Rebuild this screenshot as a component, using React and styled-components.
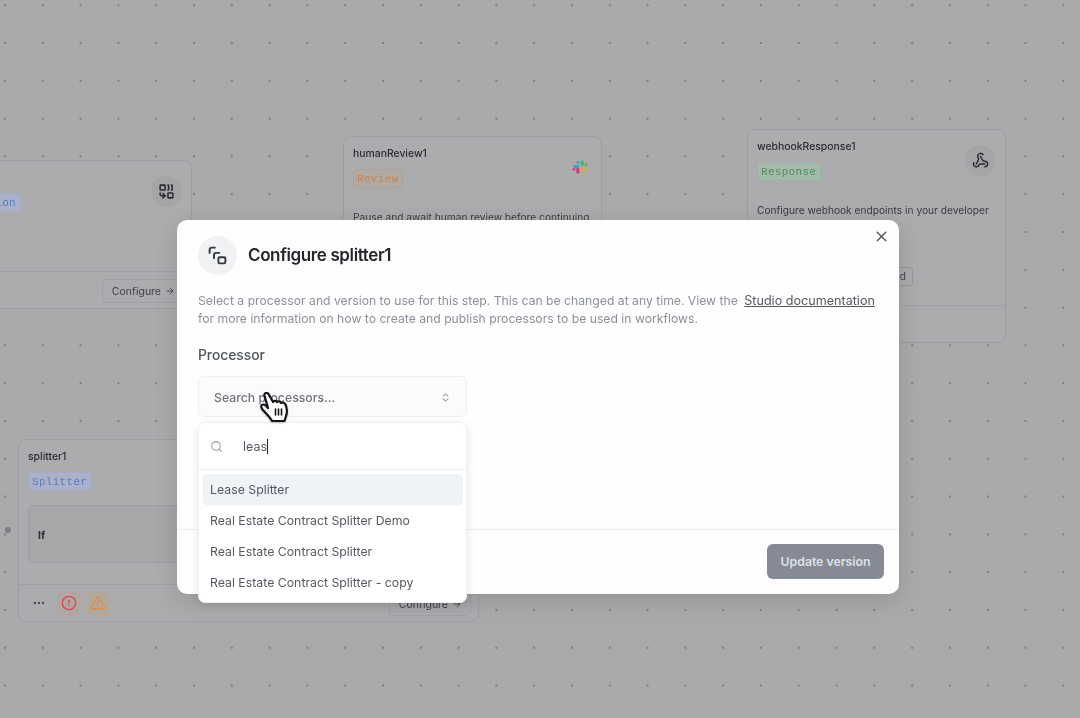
import React from "react";
import styled, { createGlobalStyle } from "styled-components";
import {
  ArrowRight,
  ChevronsUpDown,
  CircleAlert,
  Combine,
  Ellipsis,
  Search,
  TriangleAlert,
  Webhook,
  X,
} from "lucide-react";

const GlobalStyle = createGlobalStyle`
  html, body {
    margin: 0;
    padding: 0;
    width: 1080px;
    height: 718px;
    overflow: hidden;
    font-family: Inter, "Liberation Sans", sans-serif;
  }
`;

const processors = [
  "Lease Splitter",
  "Real Estate Contract Splitter Demo",
  "Real Estate Contract Splitter",
  "Real Estate Contract Splitter - copy",
];

const tones = {
  blue: { bg: "#a9b2c8", border: "#a3adc5", color: "#5a78c4" },
  orange: { bg: "#b1aaa2", border: "#a9a39d", color: "#c98350" },
  green: { bg: "#a5baab", border: "#9eb2a4", color: "#4f8f63" },
};

export default function App() {
  return (
    <>
      <GlobalStyle />
      <Page>
        <Canvas>
          <Node style={{ left: -67, top: 160, width: 259, height: 149 }}>
            <NodeBody>
              <NodeName>extraction1</NodeName>
              <Badge $tone="blue">Extraction</Badge>
            </NodeBody>
            <IconCircle>
              <Combine size={17} strokeWidth={2.2} />
            </IconCircle>
            <NodeFooter $end>
              <ConfigureButton>
                Configure <ArrowRight size={10} />
              </ConfigureButton>
            </NodeFooter>
          </Node>

          <Node style={{ left: 343, top: 136, width: 259, height: 200 }}>
            <NodeBody>
              <NodeName>humanReview1</NodeName>
              <Badge $tone="orange">Review</Badge>
              <NodeText>Pause and await human review before continuing.</NodeText>
            </NodeBody>
            <SlackSpot>
              <SlackLogo />
            </SlackSpot>
          </Node>

          <Node style={{ left: 747, top: 129, width: 259, height: 214 }}>
            <NodeBody>
              <NodeName>webhookResponse1</NodeName>
              <Badge $tone="green">Response</Badge>
              <NodeText>Configure webhook endpoints in your developer</NodeText>
            </NodeBody>
            <IconCircle>
              <Webhook size={17} strokeWidth={2} />
            </IconCircle>
            <StatusPill>Enabled</StatusPill>
            <NodeFooter />
          </Node>

          <Node style={{ left: 18, top: 439, width: 461, height: 183 }}>
            <NodeBody>
              <NodeName>splitter1</NodeName>
              <Badge $tone="blue">Splitter</Badge>
              <ConditionBox>If</ConditionBox>
            </NodeBody>
            <NodeFooter>
              <FooterIcons>
                <MoreIcon>
                  <Ellipsis size={14} strokeWidth={2} />
                </MoreIcon>
                <AlertSpot $bg="#b3a5a3">
                  <CircleAlert size={16} color="#cf4d50" />
                </AlertSpot>
                <AlertSpot $bg="#b3a89c">
                  <TriangleAlert size={16} color="#e08c46" />
                </AlertSpot>
              </FooterIcons>
              <ConfigureButton>
                Configure <ArrowRight size={10} />
              </ConfigureButton>
            </NodeFooter>
          </Node>

          <Handle />
        </Canvas>

        <Modal>
          <ModalBody>
            <ModalHeader>
              <ModalIcon>
                <SplitterGlyph />
              </ModalIcon>
              <ModalTitle>Configure splitter1</ModalTitle>
            </ModalHeader>
            <Description>
              Select a processor and version to use for this step. This can be changed at any time.
              View the <DocLink>Studio documentation</DocLink> for more information on how to create
              and publish processors to be used in workflows.
            </Description>
            <FieldLabel>Processor</FieldLabel>
            <SelectBox>
              Search processors...
              <ChevronsUpDown size={11} color="#5f6570" />
            </SelectBox>
          </ModalBody>
          <ModalFooter>
            <UpdateButton>Update version</UpdateButton>
          </ModalFooter>
          <CloseButton>
            <X size={17} strokeWidth={2} />
          </CloseButton>
          <Popover>
            <SearchRow>
              <Search size={13} color="#9a9fa7" />
              <SearchValue>leas</SearchValue>
            </SearchRow>
            <OptionList>
              {processors.map((name, i) => (
                <Option key={name} $active={i === 0}>
                  {name}
                </Option>
              ))}
            </OptionList>
          </Popover>
          <Pointer>
            <HandCursor />
          </Pointer>
        </Modal>
      </Page>
    </>
  );
}

function SplitterGlyph() {
  return (
    <svg width="21" height="21" viewBox="0 0 24 24" fill="none" stroke="#33363d" strokeWidth="2.2" strokeLinecap="round" strokeLinejoin="round">
      <path d="M3 9V5.5A2.5 2.5 0 0 1 5.5 3H9" />
      <path d="M8 15v-3.5A2.5 2.5 0 0 1 10.5 9H14" />
      <rect x="13" y="14" width="8" height="7" rx="1.5" />
    </svg>
  );
}

function SlackLogo() {
  return (
    <svg width="16" height="16" viewBox="0 0 24 24">
      <g fill="#36a5c9">
        <rect x="2" y="9" width="9" height="4.5" rx="2.2" />
        <rect x="6.5" y="3" width="4.5" height="4.5" rx="2" />
      </g>
      <g fill="#4caf6e">
        <rect x="13" y="2" width="4.5" height="9" rx="2.2" />
        <rect x="19" y="6.5" width="4" height="4.5" rx="2" />
      </g>
      <g fill="#d9a93f">
        <rect x="13" y="13" width="9" height="4.5" rx="2.2" />
        <rect x="13" y="19" width="4.5" height="4" rx="2" />
      </g>
      <g fill="#c9406a">
        <rect x="6.5" y="13" width="4.5" height="9" rx="2.2" />
        <rect x="1" y="13" width="4" height="4.5" rx="2" />
      </g>
    </svg>
  );
}

function HandCursor() {
  return (
    <svg width="29" height="31" viewBox="0 0 29 31">
      <path
        d="M4.5 3.5C4 1 7 0 8.5 2L13 10C13.5 8.5 16 8.5 17 10C17.5 9 20 9 21 11C22 10 24.5 10.5 25.5 12.5C27 16 27.5 20 26 24L24.5 29H12C10 25 6 21.5 2.5 17.5C0.5 15 1 12.5 3 12.5C4.5 12.5 6.5 14 8 16Z"
        fill="#fff"
        stroke="#15151a"
        strokeWidth="2.2"
        strokeLinejoin="round"
      />
      <path d="M15.5 17v6M18.5 17v6M21.5 17v6" stroke="#15151a" strokeWidth="1.6" strokeLinecap="round" />
    </svg>
  );
}

const Page = styled.div`
  position: relative;
  width: 1080px;
  height: 718px;
  overflow: hidden;
  filter: blur(0.3px);
`;

const Canvas = styled.div`
  position: absolute;
  inset: 0;
  background-color: #aaaaac;
  background-image: radial-gradient(circle, #7e7e82 0.9px, transparent 1.3px);
  background-size: 37.8px 37.8px;
  background-position: -13.9px -13.7px;
  filter: blur(0.4px);
`;

const Node = styled.div`
  position: absolute;
  box-sizing: border-box;
  display: flex;
  flex-direction: column;
  background: #acacae;
  border: 1px solid #9e9ea2;
  border-radius: 8px;
`;

const NodeBody = styled.div`
  display: flex;
  flex-direction: column;
  align-items: flex-start;
  padding: 10px 9px 0;
  flex: 1;
`;

const NodeName = styled.div`
  font-size: 10.4px;
  font-weight: 500;
  line-height: 14px;
  color: #2b2b30;
`;

const Badge = styled.span`
  margin-top: 8px;
  padding: 0 4px 0 3px;
  height: 19px;
  line-height: 18px;
  box-sizing: border-box;
  border-radius: 4px;
  font-family: "Liberation Mono", monospace;
  font-size: 11px;
  letter-spacing: 0.3px;
  background: ${(p) => tones[p.$tone].bg};
  border: 1px solid ${(p) => tones[p.$tone].border};
  color: ${(p) => tones[p.$tone].color};
`;

const NodeText = styled.p`
  margin: 22px 0 0;
  font-size: 10.2px;
  line-height: 14px;
  white-space: nowrap;
  color: #3a3a40;
`;

const IconCircle = styled.div`
  position: absolute;
  top: 15px;
  right: 9px;
  width: 31px;
  height: 31px;
  border-radius: 50%;
  display: flex;
  align-items: center;
  justify-content: center;
  background: #a5a5a8;
  color: #2a2a30;
`;

const SlackSpot = styled.div`
  position: absolute;
  top: 22px;
  right: 13px;
  display: flex;
`;

const StatusPill = styled.span`
  position: absolute;
  top: 137px;
  left: 99px;
  width: 66px;
  height: 19px;
  box-sizing: border-box;
  padding: 0 6px;
  line-height: 17px;
  text-align: right;
  border: 1px solid #98989c;
  border-radius: 4px;
  font-size: 10px;
  color: #3f3f46;
`;

const NodeFooter = styled.div`
  height: 37px;
  box-sizing: border-box;
  flex-shrink: 0;
  display: flex;
  align-items: center;
  justify-content: ${(p) => (p.$end ? "flex-end" : "space-between")};
  padding: 0 7px 0 12px;
  border-top: 1px solid #a1a1a5;
`;

const ConfigureButton = styled.div`
  display: flex;
  align-items: center;
  gap: 4px;
  height: 22px;
  margin-top: 2px;
  padding: 0 8px 0 9px;
  border: 1px solid #a0a0a4;
  border-radius: 5px;
  font-size: 10.5px;
  color: #3d3f48;
`;

const ConditionBox = styled.div`
  margin-top: 14px;
  box-sizing: border-box;
  width: 441px;
  height: 58px;
  display: flex;
  align-items: center;
  padding: 2px 0 0 9px;
  border: 1px solid #9e9ea2;
  border-radius: 6px;
  background: #a7a7a9;
  font-size: 10.5px;
  font-weight: 700;
  color: #2b2b30;
`;

const FooterIcons = styled.div`
  display: flex;
  align-items: center;
  gap: 6px;
  margin-left: 1px;
`;

const MoreIcon = styled.div`
  display: flex;
  margin-right: 5px;
  color: #45454b;
`;

const AlertSpot = styled.div`
  width: 23px;
  height: 23px;
  display: flex;
  align-items: center;
  justify-content: center;
  border-radius: 4px;
  background: ${(p) => p.$bg};
`;

const Handle = styled.div`
  position: absolute;
  left: 5px;
  top: 527px;
  width: 6px;
  height: 6px;
  border-radius: 50%;
  background: #7d7d82;
`;

const Modal = styled.div`
  position: absolute;
  left: 177px;
  top: 220px;
  width: 722px;
  height: 374px;
  box-sizing: border-box;
  display: flex;
  flex-direction: column;
  background: #fefefe;
  border-radius: 10px;
  box-shadow: 0 6px 24px rgba(0, 0, 0, 0.14);
`;

const ModalBody = styled.div`
  flex: 1;
  display: flex;
  flex-direction: column;
  align-items: flex-start;
  padding: 16px 21px 0;
`;

const ModalHeader = styled.div`
  display: flex;
  align-items: center;
  gap: 11px;
`;

const ModalIcon = styled.div`
  width: 39px;
  height: 39px;
  border-radius: 50%;
  display: flex;
  align-items: center;
  justify-content: center;
  background: #f1f2f4;
`;

const ModalTitle = styled.h2`
  margin: 0 0 2px;
  font-size: 17px;
  font-weight: 600;
  letter-spacing: -0.38px;
  color: #25262b;
`;

const Description = styled.p`
  margin: 17px 0 0;
  width: 684px;
  font-size: 12.2px;
  line-height: 18px;
  color: #8b9099;
`;

const DocLink = styled.span`
  margin-left: 3px;
  font-size: 12.6px;
  color: #55585f;
  text-decoration: underline;
`;

const FieldLabel = styled.div`
  margin-top: 18px;
  font-size: 13.8px;
  font-weight: 500;
  line-height: 18px;
  color: #50545c;
`;

const SelectBox = styled.div`
  margin-top: 12px;
  width: 269px;
  height: 41px;
  box-sizing: border-box;
  display: flex;
  align-items: center;
  justify-content: space-between;
  padding: 1px 15px 0 15px;
  border: 1px solid #eceef0;
  border-radius: 6px;
  background: #fbfbfc;
  font-size: 12.25px;
  font-weight: 500;
  color: #6f747d;
`;

const ModalFooter = styled.div`
  height: 65px;
  box-sizing: border-box;
  flex-shrink: 0;
  display: flex;
  align-items: center;
  justify-content: flex-end;
  padding: 0 15px 2px 0;
  border-top: 1px solid #eceef0;
`;

const UpdateButton = styled.div`
  width: 117px;
  height: 35px;
  display: flex;
  align-items: center;
  justify-content: center;
  border-radius: 6px;
  background: #858a94;
  font-size: 12.25px;
  font-weight: 600;
  color: #dfe1e5;
`;

const CloseButton = styled.div`
  position: absolute;
  top: 8px;
  right: 9px;
  display: flex;
  color: #55585f;
`;

const Popover = styled.div`
  position: absolute;
  left: 21px;
  top: 202px;
  width: 269px;
  height: 181px;
  box-sizing: border-box;
  background: #fff;
  border: 1px solid #eef0f2;
  border-radius: 7px;
  box-shadow: 0 3px 10px rgba(0, 0, 0, 0.1);
`;

const SearchRow = styled.div`
  height: 47px;
  box-sizing: border-box;
  display: flex;
  align-items: center;
  gap: 20px;
  padding-left: 11px;
  border-bottom: 1px solid #eceef0;
`;

const SearchValue = styled.span`
  font-size: 12.5px;
  color: #555962;
  border-right: 1px solid #222;
  line-height: 15px;
`;

const OptionList = styled.div`
  display: flex;
  flex-direction: column;
  padding: 4px 3px 0 4px;
`;

const Option = styled.div`
  height: 31px;
  display: flex;
  align-items: center;
  padding-left: 7px;
  border-radius: 4px;
  background: ${(p) => (p.$active ? "#eff2f6" : "transparent")};
  font-size: 12.3px;
  color: #555962;
`;

const Pointer = styled.div`
  position: absolute;
  left: 83px;
  top: 172px;
  display: flex;
  filter: drop-shadow(0 1px 1px rgba(0, 0, 0, 0.25));
`;
